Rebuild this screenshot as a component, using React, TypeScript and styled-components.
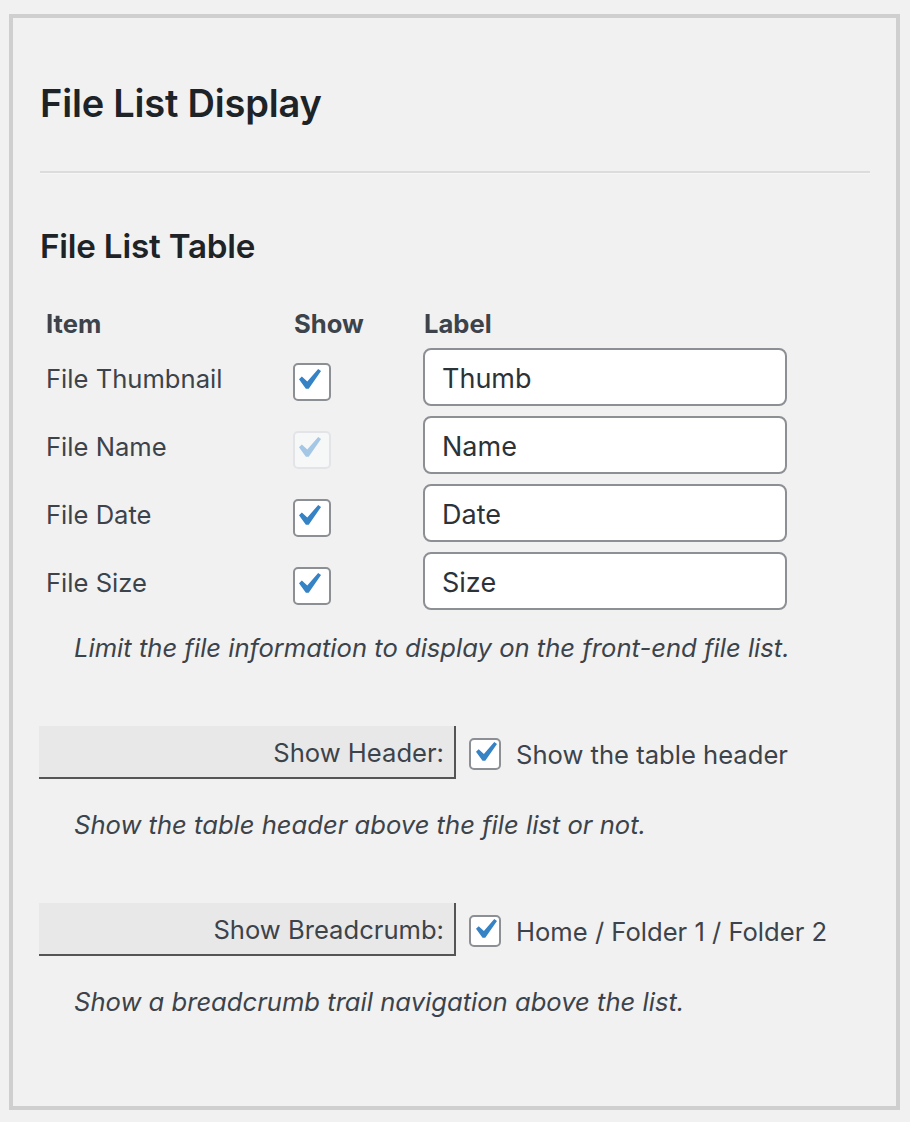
import React from 'react';
import styled, { createGlobalStyle } from 'styled-components';

const GlobalStyle = createGlobalStyle`
	html, body {
		margin: 0;
		padding: 0;
		background: #f1f1f1;
	}
	body {
		font-family: Inter, "Noto Sans", "Liberation Sans", sans-serif;
		color: #3c434a;
	}
`;

const CHECK_PATH = 'M14.83 4.89l1.34.94-5.81 8.38H9.02L5.78 9.67l1.34-1.25 2.57 2.4z';

type Row = { item: string; label: string; checked: boolean; disabled?: boolean };

const rows: Row[] = [
	{ item: 'File Thumbnail', label: 'Thumb', checked: true },
	{ item: 'File Name', label: 'Name', checked: true, disabled: true },
	{ item: 'File Date', label: 'Date', checked: true },
	{ item: 'File Size', label: 'Size', checked: true },
];

const Page = styled.div`
	padding: 14px 10px 12px 9px;
`;

const Panel = styled.section`
	box-sizing: border-box;
	width: 891px;
	height: 1096px;
	border: 4px solid #cfcfcf;
	padding: 0 26px 0 27px;
	display: flex;
	flex-direction: column;
`;

const Title = styled.h1`
	margin: 62px 0 0;
	font-size: 38px;
	line-height: 46px;
	font-weight: 600;
	color: #1d2327;
	letter-spacing: -0.2px;
`;

const Divider = styled.hr`
	margin: 45px 0 0;
	border: 0;
	border-top: 2px solid #dcdcdc;
	border-bottom: 1px solid #f6f6f6;
	height: 0;
`;

const SectionTitle = styled.h2`
	margin: 52px 0 0;
	font-size: 33.2px;
	line-height: 40px;
	font-weight: 600;
	color: #1d2327;
	letter-spacing: -0.2px;
`;

const Grid = styled.div`
	margin: 43px 0 0 6px;
	display: grid;
	grid-template-columns: 247px 130px 364px;
	grid-template-rows: 29px;
	grid-auto-rows: 58px;
	row-gap: 10px;
	align-items: center;
`;

const HeadCell = styled.div<{ $shift?: number }>`
	font-size: 25.6px;
	font-weight: 700;
	color: #3c434a;
	line-height: 29px;
	margin-left: ${p => p.$shift ?? 0}px;
`;

const ItemCell = styled.div`
	font-size: 25.6px;
	line-height: 34px;
	padding-top: 4px;
	color: #3c434a;
`;

const ShowCell = styled.div`
	display: flex;
	padding-top: 10px;
`;

const LabelInput = styled.div`
	box-sizing: border-box;
	height: 58px;
	width: 364px;
	background: #fff;
	border: 2px solid #8c8f94;
	border-radius: 8px;
	padding: 3px 17px 0;
	display: flex;
	align-items: center;
	font-size: 27px;
	color: #2c3338;
`;

const Box = styled.span<{ $size: number; $disabled?: boolean }>`
	box-sizing: border-box;
	display: inline-flex;
	flex: none;
	width: ${p => p.$size}px;
	height: ${p => p.$size}px;
	border: 2px solid ${p => (p.$disabled ? '#e2e4e7' : '#8c8f94')};
	border-radius: ${p => Math.round(p.$size / 7)}px;
	background: ${p => (p.$disabled ? '#f6f7f7' : '#fff')};
	overflow: visible;
	svg {
		display: block;
		overflow: visible;
	}
`;

const Checkbox: React.FC<{ size: number; disabled?: boolean }> = ({ size, disabled }) => {
	// scale of the dashicon check relative to the box, taken from the screenshot
	const unit = size >= 36 ? 2.12 : 2.02;
	const ox = size >= 36 ? 6 : 7;
	const oy = size >= 36 ? 6 : 4;
	const inner = size - 4;
	const x0 = 5.78 - (ox - 2) / unit;
	const y0 = 4.89 - (oy - 2) / unit;
	const span = inner / unit;
	return (
		<Box $size={size} $disabled={disabled}>
			<svg width={inner} height={inner} viewBox={`${x0} ${y0} ${span} ${span}`}>
				<path d={CHECK_PATH} fill={disabled ? '#a5c7e6' : '#3582c4'} />
			</svg>
		</Box>
	);
};

const Description = styled.p<{ $top: number }>`
	margin: ${p => p.$top}px 0 0 34px;
	font-size: 25.6px;
	line-height: 36px;
	font-style: italic;
	color: #3c434a;
`;

const OptionRow = styled.div`
	margin: 60px 0 0 -1px;
	display: flex;
	align-items: center;
`;

const OptionLabel = styled.div`
	box-sizing: border-box;
	width: 417px;
	height: 53px;
	background: #e8e8e8;
	border-right: 2px solid #555;
	border-bottom: 2px solid #555;
	display: flex;
	align-items: center;
	justify-content: flex-end;
	padding: 2px 10px 0 0;
	font-size: 25.6px;
	color: #3c434a;
`;

const OptionControl = styled.label`
	margin-left: 13px;
	display: flex;
	align-items: center;
	gap: 15px;
	font-size: 25.6px;
	color: #3c434a;
	padding-top: 3px;
`;

export default function App() {
	return (
		<>
			<GlobalStyle />
			<Page>
				<Panel>
					<Title>File List Display</Title>
					<Divider />
					<SectionTitle>File List Table</SectionTitle>
					<Grid>
						<HeadCell>Item</HeadCell>
						<HeadCell $shift={1}>Show</HeadCell>
						<HeadCell $shift={1}>Label</HeadCell>
						{rows.map(r => (
							<React.Fragment key={r.item}>
								<ItemCell>{r.item}</ItemCell>
								<ShowCell>
									<Checkbox size={38} disabled={r.disabled} />
								</ShowCell>
								<LabelInput>{r.label}</LabelInput>
							</React.Fragment>
						))}
					</Grid>
					<Description $top={20}>Limit the file information to display on the front-end file list.</Description>
					<OptionRow>
						<OptionLabel>Show Header:</OptionLabel>
						<OptionControl>
							<Checkbox size={32} />
							Show the table header
						</OptionControl>
					</OptionRow>
					<Description $top={28}>Show the table header above the file list or not.</Description>
					<OptionRow>
						<OptionLabel>Show Breadcrumb:</OptionLabel>
						<OptionControl>
							<Checkbox size={32} />
							Home / Folder 1 / Folder 2
						</OptionControl>
					</OptionRow>
					<Description $top={28}>Show a breadcrumb trail navigation above the list.</Description>
				</Panel>
			</Page>
		</>
	);
}
